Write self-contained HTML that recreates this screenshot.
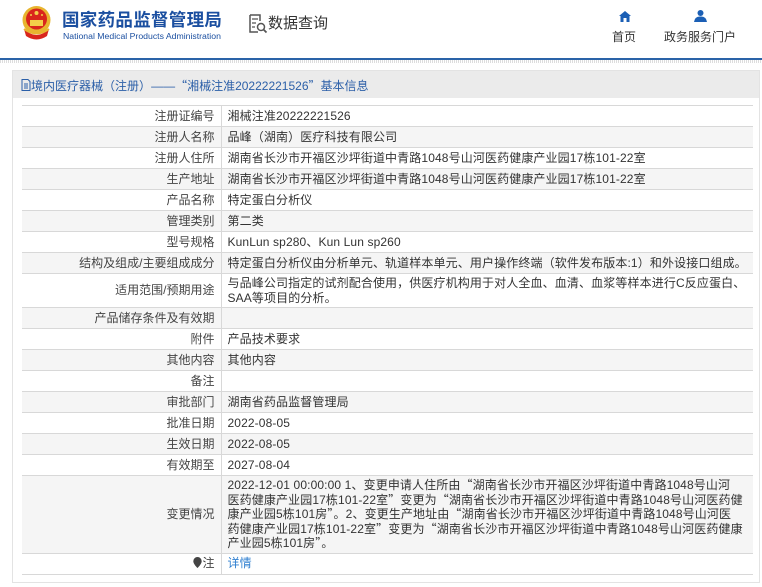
<!DOCTYPE html>
<html><head><meta charset="utf-8"><style>
*{margin:0;padding:0;box-sizing:border-box}
body{width:762px;height:587px;overflow:hidden;background:#fff;font-family:"Liberation Sans","Noto Sans CJK SC",sans-serif;color:#333;position:relative}
.c{font-family:"Noto Sans CJK SC",sans-serif}
.hdr{position:absolute;left:0;top:0;width:762px;height:59px}
.line{position:absolute;left:0;top:58px;width:762px;height:2px;background:#2a63a8}
.hatch{position:absolute;left:0;top:60px;width:762px;height:3px;background:repeating-linear-gradient(90deg,#ddd 0 1px,#fff 1px 2px)}
.t1{position:absolute;left:62px;top:7px;font-size:17.5px;font-weight:bold;color:#1b4fa0;letter-spacing:0.3px}
.t2{position:absolute;left:63px;top:31px;font-size:8.7px;color:#1b4fa0}
.dq{position:absolute;left:268px;top:12px;font-size:15px;color:#333}
.nav{position:absolute;top:28px;font-size:12px;color:#333}
.panel{position:absolute;left:12px;top:70px;width:748px;height:513px;border:1px solid #e3e3e3;background:#fff}
.tb{height:27px;background:#ebebeb;font-size:12px;color:#2b5fa8;padding:6px 0 0 8px}
table{position:absolute;left:9px;top:34px;width:731px;border-collapse:collapse;font-size:12px;table-layout:fixed}
td{border-top:1px solid #d8d8d8;border-bottom:1px solid #d8d8d8;height:21px;line-height:14.5px;padding:2px 6px;white-space:nowrap;overflow:hidden}
td.l{text-align:right;border-right:1px solid #d8d8d8;color:#444}
td.v{letter-spacing:0.12px}
tr:nth-child(even) td{background:#f5f5f5}
a{color:#2f7fd0;text-decoration:none}
</style></head><body>
<div class="hdr">
<svg style="position:absolute;left:20px;top:5px" width="33" height="36" viewBox="0 0 33 36"><circle cx="16.5" cy="15" r="14" fill="#e8b52f"/><circle cx="16.5" cy="14" r="10.5" fill="#d9261c"/><circle cx="16.5" cy="8" r="2" fill="#f3cf4a"/><circle cx="11" cy="10" r="1" fill="#f3cf4a"/><circle cx="22" cy="10" r="1" fill="#f3cf4a"/><rect x="10" y="15" width="13" height="6" fill="#f3cf4a"/><path d="M4 24 Q16.5 36 29 24 L27 31 Q16.5 38 6 31Z" fill="#d9261c"/><path d="M4 24 Q16.5 33 29 24" stroke="#e8b52f" stroke-width="2" fill="none"/></svg>
<div class="t1">国家药品监督管理局</div>
<div class="t2">National Medical Products Administration</div>
<svg style="position:absolute;left:248px;top:14px" width="20" height="20" viewBox="0 0 20 20"><path d="M2 1h10v6M2 1v17h8" stroke="#555" stroke-width="1.5" fill="none"/><path d="M4 5h6M4 9h4M4 13h3" stroke="#555" stroke-width="1.3"/><circle cx="13" cy="13" r="3.5" stroke="#555" stroke-width="1.5" fill="none"/><path d="M15.5 15.5l3 3" stroke="#555" stroke-width="1.8"/></svg>
<div class="dq">数据查询</div>
<svg style="position:absolute;left:619px;top:11px" width="12" height="11" viewBox="0 0 12 11"><path d="M6 0L0 5h1.5v6h3V7h3v4h3V5H12Z" fill="#1b5fb5"/></svg>
<div class="nav" style="left:612px">首页</div>
<svg style="position:absolute;left:694px;top:9px" width="13" height="13" viewBox="0 0 13 13"><circle cx="6.5" cy="4" r="3" fill="#1b5fb5"/><path d="M0 13Q1 7 6.5 7.5Q12 7 13 13Z" fill="#1b5fb5"/></svg>
<div class="nav" style="left:664px">政务服务门户</div>
</div>
<div class="line"></div><div class="hatch"></div>
<div class="panel">
<div class="tb"><svg width="10" height="12" viewBox="0 0 10 12" style="vertical-align:-1px"><path d="M1 .5h6l2 2v9H1z" stroke="#2b5fa8" fill="none"/><path d="M3 5h4M3 7h4M3 9h4" stroke="#2b5fa8"/></svg>境内医疗器械<span class="c">（</span>注册<span class="c">）</span>——<span class="c">“</span>湘械注准20222221526<span class="c">”</span>基本信息</div>
<table>
<colgroup><col style="width:199px"><col style="width:532px"></colgroup>
<tr><td class="l">注册证编号</td><td class="v">湘械注准20222221526</td></tr>
<tr><td class="l">注册人名称</td><td class="v">品峰<span class="c">（</span>湖南<span class="c">）</span>医疗科技有限公司</td></tr>
<tr><td class="l">注册人住所</td><td class="v">湖南省长沙市开福区沙坪街道中青路1048号山河医药健康产业园17栋101-22室</td></tr>
<tr><td class="l">生产地址</td><td class="v">湖南省长沙市开福区沙坪街道中青路1048号山河医药健康产业园17栋101-22室</td></tr>
<tr><td class="l">产品名称</td><td class="v">特定蛋白分析仪</td></tr>
<tr><td class="l">管理类别</td><td class="v">第二类</td></tr>
<tr><td class="l">型号规格</td><td class="v">KunLun sp280、Kun Lun sp260</td></tr>
<tr><td class="l">结构及组成/主要组成成分</td><td class="v">特定蛋白分析仪由分析单元、轨道样本单元、用户操作终端<span class="c">（</span>软件发布版本:1<span class="c">）</span>和外设接口组成。</td></tr>
<tr><td class="l">适用范围/预期用途</td><td class="v">与品峰公司指定的试剂配合使用，供医疗机构用于对人全血、血清、血浆等样本进行C反应蛋白、<br>SAA等项目的分析。</td></tr>
<tr><td class="l">产品储存条件及有效期</td><td></td></tr>
<tr><td class="l">附件</td><td class="v">产品技术要求</td></tr>
<tr><td class="l">其他内容</td><td class="v">其他内容</td></tr>
<tr><td class="l">备注</td><td></td></tr>
<tr><td class="l">审批部门</td><td class="v">湖南省药品监督管理局</td></tr>
<tr><td class="l">批准日期</td><td class="v">2022-08-05</td></tr>
<tr><td class="l">生效日期</td><td class="v">2022-08-05</td></tr>
<tr><td class="l">有效期至</td><td class="v">2027-08-04</td></tr>
<tr><td class="l">变更情况</td><td class="v">2022-12-01 00:00:00 1、变更申请人住所由<span class="c">“</span>湖南省长沙市开福区沙坪街道中青路1048号山河<br>医药健康产业园17栋101-22室<span class="c">”</span>变更为<span class="c">“</span>湖南省长沙市开福区沙坪街道中青路1048号山河医药健<br>康产业园5栋101房<span class="c">”</span>。2、变更生产地址由<span class="c">“</span>湖南省长沙市开福区沙坪街道中青路1048号山河医<br>药健康产业园17栋101-22室<span class="c">”</span>变更为<span class="c">“</span>湖南省长沙市开福区沙坪街道中青路1048号山河医药健康<br>产业园5栋101房<span class="c">”</span>。</td></tr>
<tr><td class="l"><svg width="9" height="11" viewBox="0 0 9 11" style="vertical-align:-1px"><path d="M4.5 0A4.2 4.2 0 0 1 8.7 4.2C8.7 7 4.5 11 4.5 11S.3 7 .3 4.2A4.2 4.2 0 0 1 4.5 0Z" fill="#444"/></svg>注</td><td class="v"><a>详情</a></td></tr>
</table>
</div>
</body></html>
